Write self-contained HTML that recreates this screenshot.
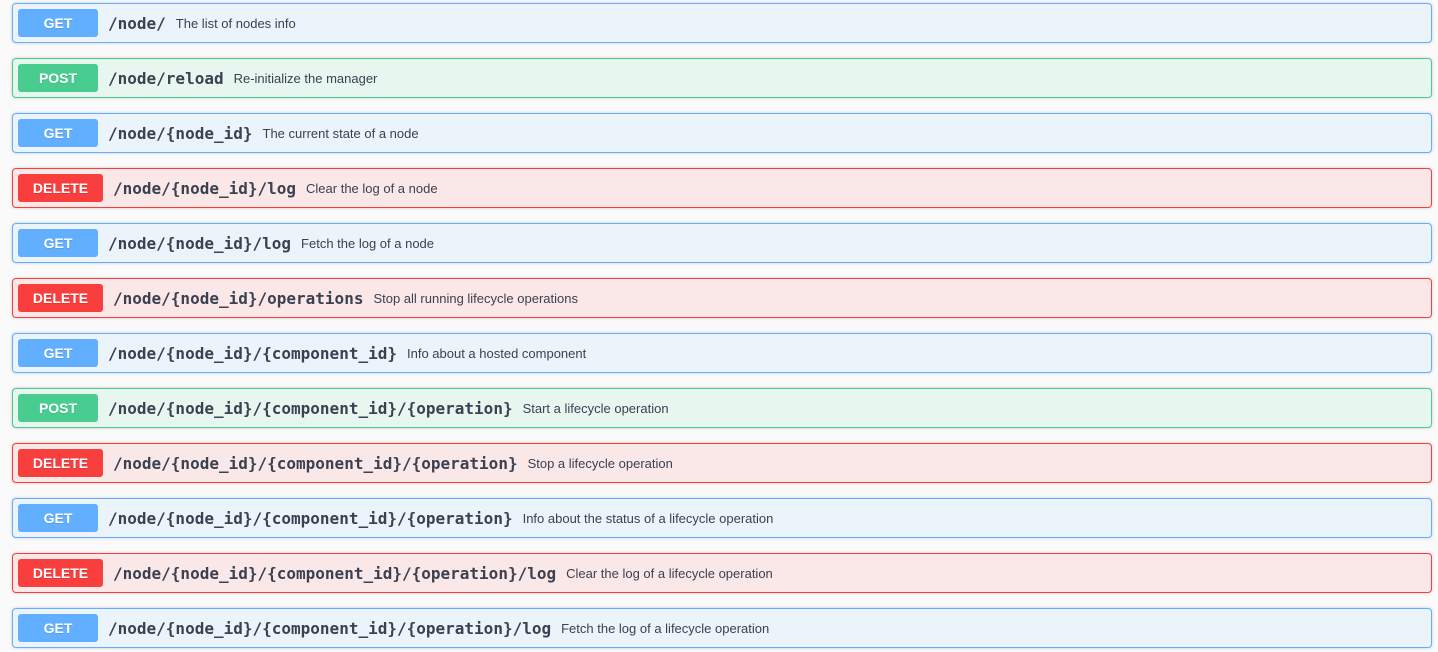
<!DOCTYPE html>
<html><head><style>
body{margin:0;background:#fafafa;width:1438px;height:652px;overflow:hidden;font-family:"Liberation Sans",sans-serif}
.r{position:absolute;left:12px;width:1418px;height:38px;border:1px solid;border-radius:4px;display:flex;align-items:center;box-shadow:0 0 3px rgba(0,0,0,.19)}
.b{margin-left:5px;height:28px;min-width:80px;border-radius:3px;color:#fff;font-weight:bold;font-size:14px;display:flex;align-items:center;justify-content:center;text-shadow:0 1px 0 rgba(0,0,0,.1)}
.p{font-family:"DejaVu Sans Mono",monospace;font-weight:bold;font-size:16px;color:#3b4151;padding:0 10px}
.d{font-size:13px;color:#3b4151}
.g{border-color:#61affe;background:#ebf3fb}.g .b{background:#61affe}
.o{border-color:#49cc90;background:#e8f6f0}.o .b{background:#49cc90}
.x{border-color:#f93e3e;background:#fae7e7}.x .b{background:#f93e3e;min-width:85px}
</style></head><body>
<div class="r g" style="top:3px"><span class="b">GET</span><span class="p">/node/</span><span class="d">The list of nodes info</span></div>
<div class="r o" style="top:58px"><span class="b">POST</span><span class="p">/node/reload</span><span class="d">Re-initialize the manager</span></div>
<div class="r g" style="top:113px"><span class="b">GET</span><span class="p">/node/{node_id}</span><span class="d">The current state of a node</span></div>
<div class="r x" style="top:168px"><span class="b">DELETE</span><span class="p">/node/{node_id}/log</span><span class="d">Clear the log of a node</span></div>
<div class="r g" style="top:223px"><span class="b">GET</span><span class="p">/node/{node_id}/log</span><span class="d">Fetch the log of a node</span></div>
<div class="r x" style="top:278px"><span class="b">DELETE</span><span class="p">/node/{node_id}/operations</span><span class="d">Stop all running lifecycle operations</span></div>
<div class="r g" style="top:333px"><span class="b">GET</span><span class="p">/node/{node_id}/{component_id}</span><span class="d">Info about a hosted component</span></div>
<div class="r o" style="top:388px"><span class="b">POST</span><span class="p">/node/{node_id}/{component_id}/{operation}</span><span class="d">Start a lifecycle operation</span></div>
<div class="r x" style="top:443px"><span class="b">DELETE</span><span class="p">/node/{node_id}/{component_id}/{operation}</span><span class="d">Stop a lifecycle operation</span></div>
<div class="r g" style="top:498px"><span class="b">GET</span><span class="p">/node/{node_id}/{component_id}/{operation}</span><span class="d">Info about the status of a lifecycle operation</span></div>
<div class="r x" style="top:553px"><span class="b">DELETE</span><span class="p">/node/{node_id}/{component_id}/{operation}/log</span><span class="d">Clear the log of a lifecycle operation</span></div>
<div class="r g" style="top:608px"><span class="b">GET</span><span class="p">/node/{node_id}/{component_id}/{operation}/log</span><span class="d">Fetch the log of a lifecycle operation</span></div>
</body></html>
